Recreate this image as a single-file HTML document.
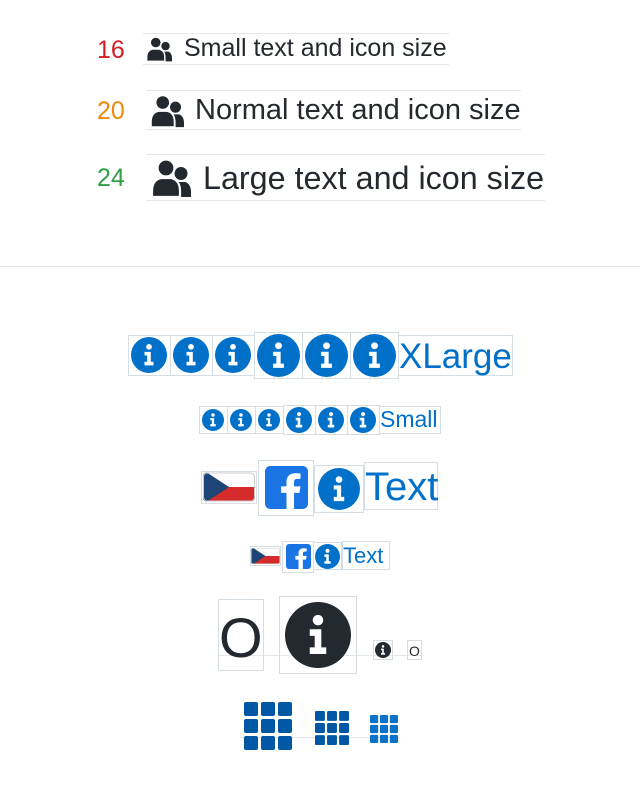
<!DOCTYPE html>
<html><head><meta charset="utf-8"><style>
body{margin:0;width:640px;height:786px;background:#fff;position:relative;font-family:"Liberation Sans",sans-serif;overflow:hidden}
.a{position:absolute}
.b{position:absolute;box-sizing:border-box;border:1px solid #d5dde5}
.t{position:absolute;white-space:nowrap;line-height:1}
.hl{position:absolute;height:1px;background:#e4e8ec}
svg{display:block}
</style></head><body>
<svg width="0" height="0" style="position:absolute"><defs>
<symbol id="users" viewBox="0 0 40 40"><path fill="#24292f" d="M30 9a6.5 6.5 0 1 1 0 13a6.5 6.5 0 1 1 0-13zM26 24h8c4 1 6 5 6 10v5H26z"/><g fill="#24292f" stroke="#fff" stroke-width="2.2"><circle cx="15" cy="10" r="8.5"/><path d="M1 39v-6c0-8 4-12 9-13h10c5 1 9 5 9 13v6z"/></g></symbol>
<symbol id="info" viewBox="0 0 40 40"><circle cx="20" cy="20" r="20"/><circle cx="20" cy="11" r="3.2" fill="#fff"/><path fill="#fff" d="M15 16.5h7v11h3v4H15v-4h3v-7h-3z"/></symbol>
<symbol id="grid" viewBox="0 0 48 48"><g><rect x="0" y="0" width="14" height="14" rx="2"/><rect x="17" y="0" width="14" height="14" rx="2"/><rect x="34" y="0" width="14" height="14" rx="2"/><rect x="0" y="17" width="14" height="14" rx="2"/><rect x="17" y="17" width="14" height="14" rx="2"/><rect x="34" y="17" width="14" height="14" rx="2"/><rect x="0" y="34" width="14" height="14" rx="2"/><rect x="17" y="34" width="14" height="14" rx="2"/><rect x="34" y="34" width="14" height="14" rx="2"/></g></symbol>
<symbol id="flag" viewBox="0 0 54 30"><rect width="54" height="30" rx="4" fill="#fff"/><path d="M0 15h54v11a4 4 0 0 1-4 4H4a4 4 0 0 1-4-4z" fill="#d52b2b"/><path d="M0 4a4 4 0 0 1 4-4h0L27 15L4 30h0a4 4 0 0 1-4-4z" fill="#1d4575"/><rect x=".5" y=".5" width="53" height="29" rx="4" fill="none" stroke="#ccc"/></symbol>
<symbol id="fb" viewBox="0 0 40 40"><rect width="40" height="40" rx="5" fill="#1b74e4"/><path fill="#fff" d="M27 40V25h5l1-6h-6v-4c0-2 1-3 3-3h3V7c-1 0-3-.3-5-.3c-5 0-8 3-8 8v4.3h-5v6h5v15z"/></symbol>
</defs></svg>

<!-- top rows -->
<div class="t" style="left:97px;top:38px;font-size:25px;color:#d21f26">16</div>
<div class="hl" style="left:143px;top:33px;width:306px"></div><div class="hl" style="left:143px;top:64px;width:306px"></div>
<svg class="a" style="left:146px;top:36px" width="26" height="26"><use href="#users"/></svg>
<div class="t" style="left:184px;top:36px;font-size:25px;color:#24292f">Small text and icon size</div>

<div class="t" style="left:97px;top:99px;font-size:25px;color:#f0880a">20</div>
<div class="hl" style="left:146px;top:90px;width:375px"></div><div class="hl" style="left:146px;top:129px;width:375px"></div>
<svg class="a" style="left:150px;top:94px" width="34" height="34"><use href="#users"/></svg>
<div class="t" style="left:195px;top:96px;font-size:29px;color:#24292f">Normal text and icon size</div>

<div class="t" style="left:97px;top:166px;font-size:25px;color:#2ea043">24</div>
<div class="hl" style="left:146px;top:154px;width:399px"></div><div class="hl" style="left:146px;top:200px;width:399px"></div>
<svg class="a" style="left:151px;top:158px" width="40" height="40"><use href="#users"/></svg>
<div class="t" style="left:203px;top:162px;font-size:32.3px;color:#24292f">Large text and icon size</div>

<div class="hl" style="left:0;top:266px;width:640px;background:#e2e2e2"></div>

<!-- XLarge row -->
<div style="color:#0070c9">
<div class="b" style="left:128px;top:335px;width:43px;height:41px"></div>
<div class="b" style="left:170px;top:335px;width:43px;height:41px"></div>
<div class="b" style="left:212px;top:335px;width:43px;height:41px"></div>
<div class="b" style="left:254px;top:332px;width:49px;height:47px"></div>
<div class="b" style="left:302px;top:332px;width:49px;height:47px"></div>
<div class="b" style="left:350px;top:332px;width:49px;height:47px"></div>
<div class="b" style="left:398px;top:335px;width:115px;height:41px"></div>
<svg class="a" style="left:131px;top:337px;fill:#0070c9" width="36" height="36"><use href="#info"/></svg>
<svg class="a" style="left:173px;top:337px;fill:#0070c9" width="36" height="36"><use href="#info"/></svg>
<svg class="a" style="left:215px;top:337px;fill:#0070c9" width="36" height="36"><use href="#info"/></svg>
<svg class="a" style="left:257px;top:334px;fill:#0070c9" width="43" height="43"><use href="#info"/></svg>
<svg class="a" style="left:305px;top:334px;fill:#0070c9" width="43" height="43"><use href="#info"/></svg>
<svg class="a" style="left:353px;top:334px;fill:#0070c9" width="43" height="43"><use href="#info"/></svg>
<div class="t" style="left:399px;top:339px;font-size:35px;color:#0070c9">XLarge</div>

<div class="b" style="left:199px;top:406px;width:29px;height:28px"></div>
<div class="b" style="left:227px;top:406px;width:29px;height:28px"></div>
<div class="b" style="left:255px;top:406px;width:29px;height:28px"></div>
<div class="b" style="left:283px;top:405px;width:33px;height:30px"></div>
<div class="b" style="left:315px;top:405px;width:33px;height:30px"></div>
<div class="b" style="left:347px;top:405px;width:33px;height:30px"></div>
<div class="b" style="left:379px;top:406px;width:62px;height:28px"></div>
<svg class="a" style="left:202px;top:409px;fill:#0070c9" width="22" height="22"><use href="#info"/></svg>
<svg class="a" style="left:230px;top:409px;fill:#0070c9" width="22" height="22"><use href="#info"/></svg>
<svg class="a" style="left:258px;top:409px;fill:#0070c9" width="22" height="22"><use href="#info"/></svg>
<svg class="a" style="left:286px;top:407px;fill:#0070c9" width="26" height="26"><use href="#info"/></svg>
<svg class="a" style="left:318px;top:407px;fill:#0070c9" width="26" height="26"><use href="#info"/></svg>
<svg class="a" style="left:350px;top:407px;fill:#0070c9" width="26" height="26"><use href="#info"/></svg>
<div class="t" style="left:380px;top:408px;font-size:23px;color:#0070c9">Small</div>

<!-- flag row -->
<div class="b" style="left:201px;top:471px;width:56px;height:33px"></div>
<div class="b" style="left:258px;top:460px;width:56px;height:56px"></div>
<div class="b" style="left:314px;top:465px;width:50px;height:48px"></div>
<div class="b" style="left:364px;top:462px;width:74px;height:48px"></div>
<svg class="a" style="left:203px;top:472px" width="52" height="30"><use href="#flag"/></svg>
<svg class="a" style="left:265px;top:466px" width="43" height="43"><use href="#fb"/></svg>
<svg class="a" style="left:318px;top:468px;fill:#0070c9" width="42" height="42"><use href="#info"/></svg>
<div class="t" style="left:365px;top:467px;font-size:40px;color:#0070c9">Text</div>

<div class="b" style="left:250px;top:546px;width:31px;height:20px"></div>
<div class="b" style="left:282px;top:541px;width:32px;height:32px"></div>
<div class="b" style="left:313px;top:542px;width:29px;height:28px"></div>
<div class="b" style="left:342px;top:541px;width:48px;height:29px"></div>
<svg class="a" style="left:251px;top:547px" width="29" height="18"><use href="#flag"/></svg>
<svg class="a" style="left:286px;top:544px" width="25" height="25"><use href="#fb"/></svg>
<svg class="a" style="left:315px;top:544px;fill:#0070c9" width="25" height="25"><use href="#info"/></svg>
<div class="t" style="left:343px;top:545px;font-size:22px;color:#0070c9">Text</div>
</div>

<!-- O row -->
<div class="hl" style="left:218px;top:655px;width:204px"></div>
<div class="b" style="left:218px;top:599px;width:46px;height:72px"></div>
<div class="b" style="left:279px;top:596px;width:78px;height:78px"></div>
<div class="b" style="left:373px;top:640px;width:20px;height:20px"></div>
<div class="b" style="left:407px;top:640px;width:15px;height:20px"></div>
<div class="t" style="left:219px;top:610px;font-size:56px;color:#24292f">O</div>
<svg class="a" style="left:285px;top:602px;fill:#24292f" width="66" height="66"><use href="#info"/></svg>
<svg class="a" style="left:375px;top:642px;fill:#24292f" width="16" height="16"><use href="#info"/></svg>
<div class="t" style="left:409px;top:644px;font-size:14px;color:#24292f">O</div>

<!-- grids -->
<div class="hl" style="left:240px;top:737px;width:160px;background:#e6e6e6"></div>
<svg class="a" style="left:244px;top:702px;fill:#0057a3" width="48" height="48"><use href="#grid"/></svg>
<svg class="a" style="left:315px;top:711px;fill:#0057a3" width="34" height="34"><use href="#grid"/></svg>
<svg class="a" style="left:370px;top:715px;fill:#0a72c9" width="28" height="28"><use href="#grid"/></svg>
</body></html>
